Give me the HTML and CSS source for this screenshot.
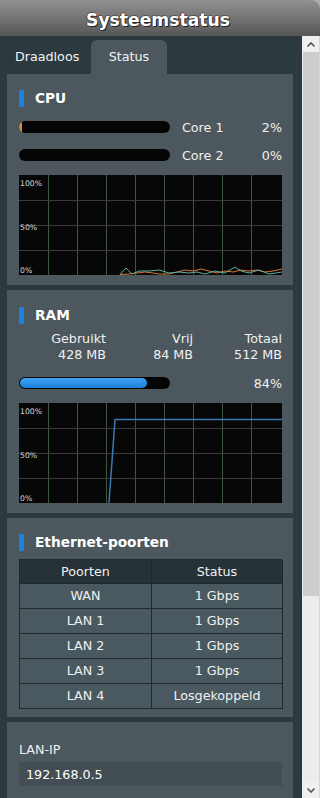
FILE: index.html
```html
<!DOCTYPE html>
<html>
<head>
<meta charset="utf-8">
<link rel="stylesheet" href="styles.css">
</head>
<body>
<div class="window">
  <div class="header"><h1 class="title">Systeemstatus</h1></div>
  <div class="main">
    <div class="content">
      <div class="tabs">
        <div class="tab">Draadloos</div>
        <div class="tab active">Status</div>
      </div>
      <div class="panel">
        <section class="card cpu">
          <div class="card-title"><span class="marker"></span>CPU</div>
          <div class="rows">
            <div class="bar-row">
              <div class="bar"><div class="fill orange" style="width:2%"></div></div>
              <span class="core-label">Core 1</span><span class="pct">2%</span>
            </div>
            <div class="bar-row">
              <div class="bar"></div>
              <span class="core-label">Core 2</span><span class="pct">0%</span>
            </div>
          </div>
          <svg class="chart" width="263" height="100" viewBox="0 0 263 100">
            <rect width="263" height="100" fill="#070707"/>
            <g stroke="#3e573e" stroke-width="1">
              <line x1="29.5" y1="0" x2="29.5" y2="100"/><line x1="58.5" y1="0" x2="58.5" y2="100"/>
              <line x1="87.5" y1="0" x2="87.5" y2="100"/><line x1="116.5" y1="0" x2="116.5" y2="100"/>
              <line x1="145.5" y1="0" x2="145.5" y2="100"/><line x1="174.5" y1="0" x2="174.5" y2="100"/>
              <line x1="203.5" y1="0" x2="203.5" y2="100"/><line x1="232.5" y1="0" x2="232.5" y2="100"/>
            </g>
            <g stroke="#3a3a3a" stroke-width="1">
              <line x1="0" y1="25.5" x2="263" y2="25.5"/><line x1="0" y1="50.5" x2="263" y2="50.5"/><line x1="0" y1="75.5" x2="263" y2="75.5"/>
            </g>
            <polyline fill="none" stroke="#d8773a" stroke-width="1" points="101,99.5 110,99 118,98 126,97 134,98 140,99 150,99 158,97 166,95 174,96 182,94 190,96 198,98 206,96 214,97 222,95 230,96 238,95 246,97 254,96 263,94"/>
            <polyline fill="none" stroke="#5eb0a0" stroke-width="1" points="101,99.5 107,93 113,99 120,96 130,96 140,95 150,98 160,97 170,98 178,97 186,99 196,96 206,98 216,92 222,96 230,98 240,95 250,99 263,97"/>
            <g class="axis">
              <text x="1" y="11">100%</text>
              <text x="1" y="55">50%</text>
              <text x="1" y="98">0%</text>
            </g>
          </svg>
        </section>

        <section class="card ram">
          <div class="card-title"><span class="marker"></span>RAM</div>
          <div class="stats">
            <span>Gebruikt</span><span>Vrij</span><span>Totaal</span>
            <span>428 MB</span><span>84 MB</span><span>512 MB</span>
          </div>
          <div class="bar-row ram-bar">
            <div class="bar"><div class="fill blue" style="width:84%"></div></div>
            <span class="pct">84%</span>
          </div>
          <svg class="chart" width="263" height="100" viewBox="0 0 263 100">
            <rect width="263" height="100" fill="#070707"/>
            <g stroke="#3e573e" stroke-width="1">
              <line x1="29.5" y1="0" x2="29.5" y2="100"/><line x1="58.5" y1="0" x2="58.5" y2="100"/>
              <line x1="87.5" y1="0" x2="87.5" y2="100"/><line x1="116.5" y1="0" x2="116.5" y2="100"/>
              <line x1="145.5" y1="0" x2="145.5" y2="100"/><line x1="174.5" y1="0" x2="174.5" y2="100"/>
              <line x1="203.5" y1="0" x2="203.5" y2="100"/><line x1="232.5" y1="0" x2="232.5" y2="100"/>
            </g>
            <g stroke="#3a3a3a" stroke-width="1">
              <line x1="0" y1="25.5" x2="263" y2="25.5"/><line x1="0" y1="50.5" x2="263" y2="50.5"/><line x1="0" y1="75.5" x2="263" y2="75.5"/>
            </g>
            <polyline fill="none" stroke="#3a78b4" stroke-width="1.5" points="90,100 96,16.5 263,16.5"/>
            <g class="axis">
              <text x="1" y="11">100%</text>
              <text x="1" y="55">50%</text>
              <text x="1" y="98">0%</text>
            </g>
          </svg>
        </section>

        <section class="card eth">
          <div class="card-title"><span class="marker"></span>Ethernet-poorten</div>
          <div class="ports">
            <div class="cell head">Poorten</div><div class="cell head">Status</div>
            <div class="cell">WAN</div><div class="cell">1 Gbps</div>
            <div class="cell">LAN 1</div><div class="cell">1 Gbps</div>
            <div class="cell">LAN 2</div><div class="cell">1 Gbps</div>
            <div class="cell">LAN 3</div><div class="cell">1 Gbps</div>
            <div class="cell">LAN 4</div><div class="cell">Losgekoppeld</div>
          </div>
        </section>

        <section class="card lan">
          <div class="lan-label">LAN-IP</div>
          <div class="lan-input">192.168.0.5</div>
        </section>
      </div>
    </div>
    <div class="scrollbar">
      <div class="sb-btn"><svg width="10" height="7" viewBox="0 0 10 7"><polyline points="1.5,5.5 5,2 8.5,5.5" fill="none" stroke="#555" stroke-width="1.6"/></svg></div>
      <div class="sb-thumb"></div>
      <div class="sb-space"></div>
      <div class="sb-btn"><svg width="10" height="7" viewBox="0 0 10 7"><polyline points="1.5,1.5 5,5 8.5,1.5" fill="none" stroke="#555" stroke-width="1.6"/></svg></div>
    </div>
  </div>
</div>
</body>
</html>
```

FILE: styles.css
```css
html, body {
  margin: 0;
  padding: 0;
  background: #a9aeb0;
}
body {
  font-family: "DejaVu Sans", Verdana, sans-serif;
  color: #f0f0f0;
}
.window {
  width: 320px;
  height: 798px;
  display: flex;
  flex-direction: column;
  overflow: hidden;
}
.header {
  height: 36px;
  flex: none;
  background: linear-gradient(#919191, #565656);
  border-top-right-radius: 9px;
  display: flex;
  align-items: center;
  justify-content: center;
}
.title {
  margin: 0 0 0 -4px;
  font-size: 17.2px;
  font-weight: bold;
  color: #fff;
  line-height: 20px;
  text-shadow: 1px 1px 0 #222, -1px 0 0 #444, 0 -1px 0 #555;
  padding-top: 4px;
}
.main {
  flex: 1;
  display: flex;
  min-height: 0;
}
.content {
  width: 302px;
  background: #2c3a40;
  overflow: hidden;
}
.tabs {
  height: 38px;
  display: flex;
  align-items: flex-end;
  padding-left: 7px;
}
.tab {
  height: 34px;
  line-height: 34px;
  font-size: 12.7px;
  color: #f2f2f2;
}
.tab:first-child {
  width: 76px;
  padding-left: 8px;
}
.tab.active {
  width: 76px;
  text-align: center;
  background: #4c585d;
  border-radius: 6px 6px 0 0;
}
.panel {
  margin-left: 7px;
  width: 286px;
  display: flex;
  flex-direction: column;
  gap: 5px;
}
.card {
  background: #4c585d;
  padding: 0 11px 0 12px;
}
.card-title {
  height: 17px;
  line-height: 17px;
  display: flex;
  align-items: center;
  font-weight: bold;
  font-size: 13.7px;
  color: #fff;
}
.marker {
  width: 5px;
  height: 17px;
  background: #1c82e2;
  border-radius: 1px;
  margin-right: 11px;
}
.cpu {
  padding-top: 16px;
  padding-bottom: 10px;
  height: 185px;
}
.rows {
  margin-top: 6px;
}
.bar-row {
  height: 28px;
  display: flex;
  align-items: center;
  font-size: 12.7px;
}
.ram-bar {
  margin-top: 6px;
}
.bar {
  width: 151px;
  height: 12px;
  border-radius: 6px;
  background: #050505;
  flex: none;
  overflow: hidden;
}
.fill {
  height: 100%;
  border-radius: 6px;
}
.fill.orange {
  background: #d98a3b;
  min-width: 3px;
}
.fill.blue {
  height: 10px;
  margin: 1px;
  background: linear-gradient(#3ea3f2, #1a80d8);
}
.core-label {
  margin-left: 12px;
  color: #f0f0f0;
}
.pct {
  flex: 1;
  text-align: right;
  color: #f0f0f0;
}
.chart {
  display: block;
  margin-top: 6px;
}
.axis text {
  font-family: "DejaVu Sans", Verdana, sans-serif;
  font-size: 7.7px;
  fill: #d8d8d8;
}
.ram {
  padding-top: 17px;
  padding-bottom: 10px;
}
.stats {
  margin-top: 7px;
  display: grid;
  grid-template-columns: 87px 87px 89px;
  font-size: 12.7px;
  line-height: 16px;
  text-align: right;
  color: #f0f0f0;
}
.eth {
  padding-top: 16px;
  padding-bottom: 8px;
}
.ports {
  margin-top: 8px;
  display: grid;
  grid-template-columns: 132px 131px;
  border-top: 1px solid #1e292e;
  border-left: 1px solid #1e292e;
}
.cell {
  height: 25px;
  box-sizing: border-box;
  border-right: 1px solid #1e292e;
  border-bottom: 1px solid #1e292e;
  background: #4a595f;
  text-align: center;
  font-size: 12.7px;
  line-height: 24px;
  color: #f0f0f0;
}
.cell.head {
  background: #263238;
  height: 24px;
  line-height: 23px;
}
.lan {
  padding-top: 20px;
  height: 120px;
}
.lan-label {
  font-size: 12.7px;
  line-height: 16px;
  color: #f0f0f0;
}
.lan-input {
  margin-top: 4px;
  height: 24px;
  line-height: 25px;
  background: #424e53;
  padding-left: 7px;
  font-size: 12.7px;
  color: #fff;
}
.scrollbar {
  width: 18px;
  background: #ececec;
  display: flex;
  flex-direction: column;
  border-right: 1px solid #d6d6d6;
  box-sizing: border-box;
}
.sb-btn {
  height: 16px;
  flex: none;
  display: flex;
  align-items: center;
  justify-content: center;
  background: #f0f0f0;
}
.sb-thumb {
  height: 544px;
  margin: 0 0 0 1px;
  background: #cdcdcd;
  flex: none;
}
.sb-space {
  flex: 1;
}
```
